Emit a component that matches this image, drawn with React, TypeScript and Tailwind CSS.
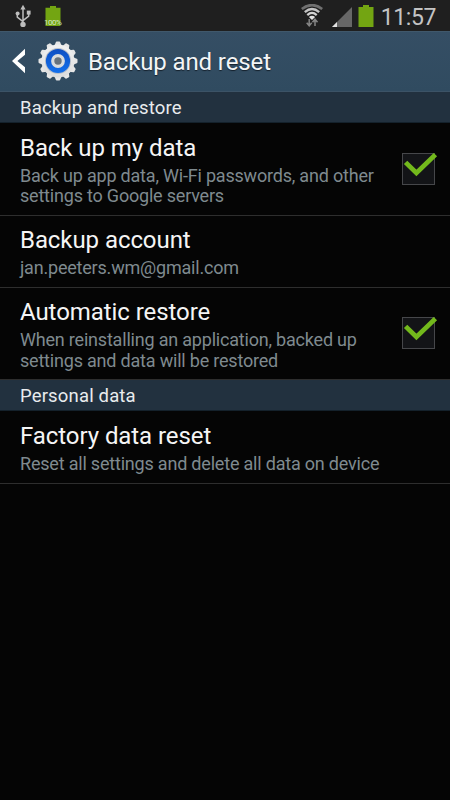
import type { ReactNode } from "react";
import clsx from "clsx";

interface PreferenceRowProps {
  title: string;
  summary: ReactNode;
  checked?: boolean;
  className?: string;
}

const UsbIcon = () => (
  <svg width="16" height="24" viewBox="0 0 16 24" fill="none">
    <path d="M8 3v17M2.3 9.5v3.6L8 17.6M13.7 9v3.2L8 16.6" stroke="#bdbdbd" strokeWidth="1.5" />
    <path d="M8 0.8 10.6 5.6H5.4z" fill="#bdbdbd" />
    <circle cx="2.6" cy="9.4" r="2" fill="#bdbdbd" />
    <path d="M11.8 6.6h3.8v4h-3.8z" fill="#bdbdbd" />
    <circle cx="8" cy="20.4" r="2.7" fill="#bdbdbd" />
  </svg>
);

const WifiIcon = () => (
  <svg width="22" height="24" viewBox="0 0 22 24" fill="none">
    <path d="M.8 5Q11-2.8 21.2 5" stroke="#707070" strokeWidth="2.6" />
    <path d="M3.8 8.2Q11 2 18.2 8.2" stroke="#c4c4c4" strokeWidth="2.4" />
    <path d="M6.3 11.1Q11 6.8 15.7 11.1" stroke="#d2d2d2" strokeWidth="2.2" />
    <path d="M7.9 13Q11 10.4 14.1 13L11 16z" fill="#e2e2e2" />
    <path d="M8.2 15v7M5.7 18.8l2.5 3 2.5-3M14 22v-6.6M11.5 18.2l2.5-3 2.5 3" stroke="#858585" strokeWidth="1.5" />
  </svg>
);

const SignalIcon = () => (
  <svg width="20" height="20" viewBox="0 0 20 20">
    <path d="M20 0v20H0z" fill="#676767" />
    <path d="M5 15v5H0z" fill="#e4e4e4" />
  </svg>
);

const BatteryIcon = ({ className }: { className?: string }) => (
  <svg className={className} viewBox="0 0 16 22" preserveAspectRatio="none">
    <path d="M5 0h6v2h4.5v20H.5V2H5z" fill="#73a512" />
  </svg>
);

// 12 teeth around the settings wheel
const teeth = Array.from({ length: 12 }, (_, i) => i * 30);

const GearIcon = () => (
  <svg width="40" height="40" viewBox="0 0 40 40">
    <defs>
      <linearGradient id="metal" x1="0" y1="0" x2="0" y2="1">
        <stop offset="0" stopColor="#f2f2f2" />
        <stop offset="1" stopColor="#dcdcdc" />
      </linearGradient>
      <linearGradient id="blue" x1="0" y1="0" x2="0" y2="1">
        <stop offset="0" stopColor="#0e4ec2" />
        <stop offset="1" stopColor="#1470ec" />
      </linearGradient>
    </defs>
    {teeth.map((angle) => (
      <path
        key={angle}
        d="M16.3 5 17.8 1.2Q18 .5 18.7.5h2.6q.7 0 .9.7L23.7 5z"
        fill="#e6e6e6"
        transform={`rotate(${angle} 20 20)`}
      />
    ))}
    <circle cx="20" cy="20" r="16.6" fill="url(#metal)" />
    <circle cx="20" cy="20" r="13" fill="#b9c0ca" />
    <circle cx="20" cy="20" r="12.1" fill="url(#blue)" />
    <circle cx="20" cy="20" r="5.3" fill="#66717c" stroke="#d9dbdd" strokeWidth="3.2" />
  </svg>
);

const Checkbox = () => (
  <svg className="mb-[0.5px] shrink-0" width="38" height="38" viewBox="0 0 38 38">
    <rect x="2.5" y="3.5" width="32" height="31" fill="#131417" stroke="#46474a" />
    <path d="M5.6 12.4 16.4 23 35.4 4.6" fill="none" stroke="#73b91c" strokeWidth="4.8" />
  </svg>
);

const StatusBar = () => (
  <div className="flex h-[31px] items-start bg-[#1f1f1f]">
    <div className="ml-[15px] mt-1">
      <UsbIcon />
    </div>
    <div className="relative ml-[14px] mt-[6px] w-4">
      <BatteryIcon className="h-5 w-4" />
      <span className="absolute -left-px top-[13px] text-[8px] leading-[8px] tracking-[-0.5px] text-[#dbe6c6]">
        100%
      </span>
    </div>
    <div className="ml-auto mt-1">
      <WifiIcon />
    </div>
    <div className="ml-[9px] mt-[7px]">
      <SignalIcon />
    </div>
    <BatteryIcon className="ml-[6px] mt-[5px] h-[22px] w-4" />
    <span className="ml-[6px] mr-[14px] mt-[4px] w-[56px] text-right text-[23px] leading-[27px] tracking-[-0.4px] text-[#c4c4c4]">
      11:57
    </span>
  </div>
);

const ActionBar = () => (
  <div className="flex h-[61px] items-center border-b border-[#3c5366] bg-linear-to-b from-[#354e64] to-[#304b60] shadow-[inset_0_1px_0_#40586b]">
    <svg className="ml-[11px]" width="15" height="26" viewBox="0 0 15 26">
      <path d="M14 .8v6L6.4 13l7.6 6.2v6L1 13z" fill="#fff" />
    </svg>
    <div className="ml-[12px]">
      <GearIcon />
    </div>
    <h1 className="ml-[10px] pt-[2px] text-[24px] tracking-[-0.12px] text-[#f3f5f6] [text-shadow:0_1px_1px_#14202c]">
      Backup and reset
    </h1>
  </div>
);

const SectionHeader = ({ title }: { title: string }) => (
  <div className="flex h-[31px] items-center border-b border-[#14212b] bg-[#22313f] pl-5 pt-[2px] text-[18.5px] leading-[22px] tracking-[0.16px] text-[#e9ecee]">
    {title}
  </div>
);

const PreferenceRow = ({ title, summary, checked, className }: PreferenceRowProps) => (
  <div className={clsx("flex items-center border-b border-[#2e2e2e] pl-5 pr-3", className)}>
    <div className="flex-1 whitespace-nowrap pt-[2px]">
      <h2 className="mb-[3px] text-[24px] leading-[29px] tracking-[-0.07px] text-[#f5f5f5]">{title}</h2>
      <p className="text-[18px] leading-[20.5px] tracking-[-0.2px] text-[#7f8a8f]">{summary}</p>
    </div>
    {checked && <Checkbox />}
  </div>
);

export default function App() {
  return (
    <div className="h-[800px] w-[450px] overflow-hidden bg-[#050505] font-[Roboto,sans-serif]">
      <StatusBar />
      <ActionBar />
      <SectionHeader title="Backup and restore" />
      <PreferenceRow
        className="h-[93px]"
        title="Back up my data"
        summary={
          <>
            Back up app data, Wi-Fi passwords, and other
            <br />
            settings to Google servers
          </>
        }
        checked
      />
      <PreferenceRow className="h-[72px]" title="Backup account" summary="jan.peeters.wm@gmail.com" />
      <PreferenceRow
        className="h-[92px]"
        title="Automatic restore"
        summary={
          <>
            When reinstalling an application, backed up
            <br />
            settings and data will be restored
          </>
        }
        checked
      />
      <SectionHeader title="Personal data" />
      <PreferenceRow
        className="h-[73px]"
        title="Factory data reset"
        summary="Reset all settings and delete all data on device"
      />
    </div>
  );
}
